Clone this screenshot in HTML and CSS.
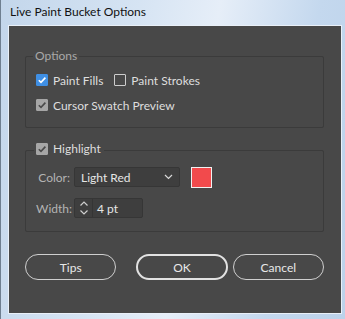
FILE: index.html
```html
<!DOCTYPE html>
<html lang="en">
<head>
    <meta charset="UTF-8">
    <meta name="viewport" content="width=device-width, initial-scale=1.0">
    <title>Live Paint Bucket Options</title>
    <link rel="stylesheet" href="styles.css">
</head>
<body>
    <div class="window">
        <div class="titlebar">Live Paint Bucket Options</div>
        <div class="panel">
            <fieldset class="group group-options">
                <legend class="legend-text">Options</legend>
                <div class="row">
                    <label class="check-item">
                        <span class="box box-on">
                            <svg width="12" height="12" viewBox="0 0 12 12"><path d="M2.8 6.2 L5 8.4 L9.4 3.6" fill="none" stroke="#fff" stroke-width="1.6"/></svg>
                        </span>
                        Paint Fills
                    </label>
                    <label class="check-item">
                        <span class="box"></span>
                        Paint Strokes
                    </label>
                </div>
                <div class="row">
                    <label class="check-item">
                        <span class="box box-dim">
                            <svg width="12" height="12" viewBox="0 0 12 12"><path d="M2.8 6.2 L5 8.4 L9.4 3.6" fill="none" stroke="#4a4a4a" stroke-width="1.6"/></svg>
                        </span>
                        Cursor Swatch Preview
                    </label>
                </div>
            </fieldset>

            <fieldset class="group group-highlight">
                <legend class="legend-check">
                    <label class="check-item">
                        <span class="box box-dim">
                            <svg width="12" height="12" viewBox="0 0 12 12"><path d="M2.8 6.2 L5 8.4 L9.4 3.6" fill="none" stroke="#4a4a4a" stroke-width="1.6"/></svg>
                        </span>
                        Highlight
                    </label>
                </legend>
                <div class="row field-row">
                    <span class="field-label">Color:</span>
                    <div class="select">
                        <span>Light Red</span>
                        <svg width="9" height="6" viewBox="0 0 9 6"><path d="M1 1 L4.5 4.5 L8 1" fill="none" stroke="#d8d8d8" stroke-width="1.2"/></svg>
                    </div>
                    <span class="swatch"></span>
                </div>
                <div class="row field-row">
                    <span class="field-label">Width:</span>
                    <div class="spinner">
                        <span class="spin-arrows">
                            <svg width="10" height="16" viewBox="0 0 10 16"><path d="M1.5 5.5 L5 2 L8.5 5.5 M1.5 10.5 L5 14 L8.5 10.5" fill="none" stroke="#cfcfcf" stroke-width="1.2"/></svg>
                        </span>
                        <span class="spin-value">4 pt</span>
                    </div>
                </div>
            </fieldset>

            <div class="buttons">
                <button class="btn">Tips</button>
                <button class="btn btn-default">OK</button>
                <button class="btn">Cancel</button>
            </div>
        </div>
    </div>
</body>
</html>
```

FILE: styles.css
```css
body {
    margin: 0;
    font-family: Lato, "Liberation Sans", sans-serif;
    font-size: 12px;
    background-color: #c8daee;
}
.window {
    width: 345px;
    height: 319px;
    box-sizing: border-box;
    display: flex;
    flex-direction: column;
    padding: 0 4px 6px 8px;
    border-left: 1px solid #6f7f90;
    background: linear-gradient(100deg, #c3d6eb 0%, #d6e4f3 35%, #e6eef8 55%, #c4d8ee 80%, #bcd2ea 100%);
}
.titlebar {
    height: 26px;
    line-height: 24px;
    margin-left: -8px;
    padding-left: 9px;
    color: #111;
}
.panel {
    flex: 1;
    display: flex;
    flex-direction: column;
    padding: 23px 17px 0 16px;
    background-color: #484848;
    outline: 1px solid #e9f0f8;
}

/* group boxes */
.group {
    margin: 0;
    padding: 7px 10px 12px 10px;
    border: 1px solid #3b3b3b;
    border-radius: 2px;
    display: flex;
    flex-direction: column;
    gap: 5px;
}
.group-highlight {
    margin-top: 13px;
    padding: 8px 10px 13px 10px;
    gap: 11px;
}
.legend-text {
    margin-left: -3px;
    padding: 0 2px;
    line-height: 14px;
    color: #a9a9a9;
}
.legend-check {
    margin-left: -2px;
    padding: 0 3px 0 2px;
    line-height: 16px;
}
.row {
    display: flex;
    align-items: center;
    height: 20px;
    gap: 11px;
}

/* checkboxes */
.check-item {
    display: inline-flex;
    align-items: center;
    gap: 5px;
    color: #dedede;
}
.box {
    width: 12px;
    height: 12px;
    box-sizing: border-box;
    border: 1px solid #cdcdcd;
    border-radius: 1px;
    display: inline-flex;
}
.box svg {
    margin: -1px;
}
.box-on {
    background-color: #3f8fe4;
    border-color: #3f8fe4;
}
.box-dim {
    background-color: #a6a6a6;
    border-color: #a6a6a6;
}

/* fields */
.field-row {
    gap: 4px;
}
.field-label {
    width: 34px;
    text-align: right;
    color: #b4b4b4;
}
.select {
    width: 106px;
    height: 20px;
    box-sizing: border-box;
    display: flex;
    align-items: center;
    justify-content: space-between;
    padding: 0 6px;
    background-color: #3e3e3e;
    border: 1px solid #363636;
    border-radius: 2px;
    color: #e6e6e6;
}
.swatch {
    width: 21px;
    height: 21px;
    box-sizing: border-box;
    margin-left: 7px;
    border: 1px solid #f2f2f2;
    background-color: #f24a4c;
}
.spinner {
    width: 69px;
    height: 20px;
    box-sizing: border-box;
    display: flex;
    background-color: #3e3e3e;
    border: 1px solid #363636;
    border-radius: 2px;
    color: #e6e6e6;
}
.spin-arrows {
    width: 17px;
    display: flex;
    align-items: center;
    justify-content: center;
    border-right: 1px solid #353535;
}
.spin-value {
    display: flex;
    align-items: center;
    padding-left: 4px;
}

/* buttons */
.buttons {
    display: flex;
    margin-top: 22px;
    gap: 5px;
}
.btn {
    width: 92px;
    height: 26px;
    box-sizing: border-box;
    border: 1px solid #cfcfcf;
    border-radius: 13px;
    background: transparent;
    color: #e8e8e8;
    font-family: inherit;
    font-size: 12px;
    padding: 0;
}
.btn-default {
    margin-left: 15px;
    border: 2px solid #e2e2e2;
}
```
